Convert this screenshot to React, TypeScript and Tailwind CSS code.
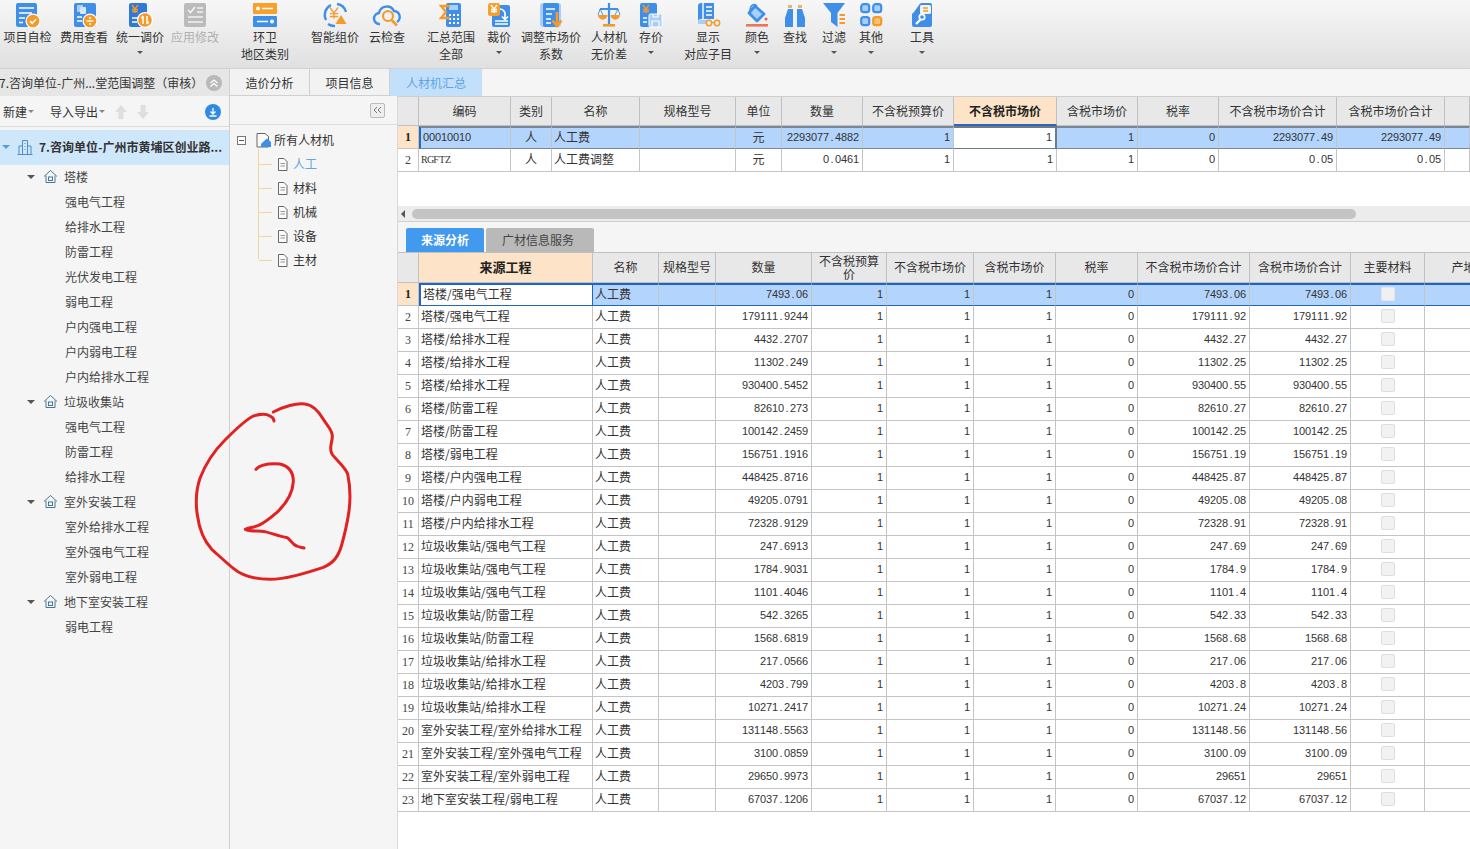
import React from "react";

const B = "#3f8fe8";
const O = "#f39a2b";

function Yen({ x, y, s = 1, c = "#fff" }: { x: number; y: number; s?: number; c?: string }) {
  return (
    <path
      d={`M${x - 3 * s} ${y - 4 * s}L${x} ${y}L${x + 3 * s} ${y - 4 * s}M${x} ${y}V${y + 4 * s}M${x - 3 * s} ${y + 0.5 * s}H${x + 3 * s}M${x - 3 * s} ${y + 2.5 * s}H${x + 3 * s}`}
      stroke={c}
      strokeWidth="1.3"
      fill="none"
    />
  );
}

const icons: Record<string, React.ReactNode> = {
  check: (
    <>
      <rect x="4" y="3" width="21" height="24" rx="2" fill={B} />
      <path d="M7 8H22M7 13H20M7 18H13M7 22.5H11" stroke="#fff" strokeWidth="1.6" />
      <circle cx="21" cy="21" r="7.5" fill="#fff" />
      <circle cx="21" cy="21" r="6.3" fill={O} />
      <path d="M18 21l2.2 2.3 3.8-4" stroke="#fff" strokeWidth="1.6" fill="none" />
    </>
  ),
  fee: (
    <>
      <rect x="6" y="3" width="22" height="24" rx="2" fill={B} />
      <rect x="9" y="5" width="6" height="7" rx="1" fill="#a9d0f8" />
      <rect x="12" y="7" width="6" height="7" rx="1" fill="#d5e8fb" />
      <path d="M9 17H14M9 21H14" stroke="#fff" strokeWidth="1.6" />
      <circle cx="22" cy="21" r="7.5" fill="#fff" />
      <circle cx="22" cy="21" r="6.3" fill={O} />
      <path d="M18.5 21H25.5" stroke="#fff" strokeWidth="1.4" />
      <circle cx="22" cy="18" r="1" fill="#fff" />
      <circle cx="22" cy="24" r="1" fill="#fff" />
    </>
  ),
  unify: (
    <>
      <rect x="5" y="3" width="18" height="24" rx="2" fill="#2f7ad6" />
      <Yen x={11} y={9} c={O} />
      <path d="M8 18H14M8 22H13" stroke="#fff" strokeWidth="1.5" />
      <circle cx="21" cy="20" r="8" fill="#fff" />
      <circle cx="21" cy="20" r="6.8" fill={O} />
      <path d="M19 16v8M19 16l-1.8 2.2M23 24v-8M23 24l1.8-2.2" stroke="#fff" strokeWidth="1.5" fill="none" />
    </>
  ),
  apply: (
    <>
      <rect x="5" y="3" width="22" height="24" rx="2" fill="#bbbbbb" />
      <path d="M9 10l2.5 2.5L16 7M18 8H24M18 12H24M9 17H24M9 22H24" stroke="#f2f2f2" strokeWidth="1.7" fill="none" />
    </>
  ),
  region: (
    <>
      <rect x="4" y="3" width="24" height="11" rx="1" fill="#f6a02d" />
      <rect x="4" y="16" width="24" height="11" rx="1" fill={B} />
      <circle cx="9" cy="8.5" r="2" fill="#fff" />
      <path d="M13 8.5H24M8 21.5H19" stroke="#fff" strokeWidth="1.6" />
      <circle cx="23" cy="21.5" r="2" fill="#fff" />
    </>
  ),
  smart: (
    <>
      <path d="M7 20A11 11 0 0 1 12 5M18 4A11 11 0 0 1 27 12M9 24A11 11 0 0 0 16 26" stroke={B} strokeWidth="2.4" fill="none" />
      <Yen x={15} y={13} s={1.4} c={O} />
      <path d="M22 15l5.500 9h-11z" fill={O} />
    </>
  ),
  cloud: (
    <>
      <path d="M9 24A5.500 5.500 0 0 1 8 13A8 8 0 0 1 23 11A6 6 0 0 1 26 22" stroke={B} strokeWidth="2.4" fill="none" />
      <circle cx="17" cy="16" r="5" stroke={O} strokeWidth="2.2" fill="#f2f2f2" />
      <path d="M20.500 20L26 25.500" stroke={O} strokeWidth="2.6" />
    </>
  ),
  sum: (
    <>
      <rect x="11" y="3" width="15" height="24" rx="2" fill={B} />
      <rect x="14" y="5" width="9" height="5" fill="#a9d0f8" />
      <path d="M14 15h2M18 15h2M22 15h2M14 19h2M18 19h2M22 19h2M14 23h2M18 23h2M22 23h2" stroke="#fff" strokeWidth="1.8" />
      <path d="M15 6H6L11 12L6 18H15" stroke={O} strokeWidth="2.3" fill="none" />
    </>
  ),
  cut: (
    <>
      <rect x="9" y="5" width="18" height="22" rx="2" fill={B} />
      <path d="M16 9A6 6 0 0 1 22 13V19M19 16.500l3 3 3-3" stroke="#fff" strokeWidth="1.7" fill="none" />
      <path d="M12 21H25M12 24H25" stroke="#fff" strokeWidth="1.4" />
      <rect x="5" y="3" width="12" height="13" rx="2.500" fill="#f6a02d" />
      <Yen x={11} y={9} />
    </>
  ),
  adjust: (
    <>
      <rect x="5" y="3" width="21" height="24" rx="3" fill="#a9cef5" />
      <rect x="8" y="3" width="16" height="24" rx="2" fill={B} />
      <path d="M11 9H20M11 14H17M11 19H16M11 23H16" stroke="#fff" strokeWidth="1.6" />
      <path d="M22 12V25M17.500 20.500L22 26L26.500 20.500" stroke={O} strokeWidth="2.6" fill="none" />
    </>
  ),
  scale: (
    <>
      <path d="M16 3V24M7 9H25" stroke={B} strokeWidth="2.2" />
      <rect x="10" y="24" width="12" height="2.600" fill={O} />
      <path d="M7 9L5 15M7 9L10 15M25 9L22 15M25 9L27 15" stroke={B} strokeWidth="0.9" />
      <path d="M5 15H14.500A4.700 4.700 0 0 1 5 15ZM17.500 15H27A4.700 4.700 0 0 1 17.500 15Z" fill={O} />
    </>
  ),
  save: (
    <>
      <rect x="5" y="3" width="17" height="24" rx="2" fill={B} />
      <Yen x={11} y={9} c={O} />
      <path d="M8 18H12M8 22H12" stroke="#fff" strokeWidth="1.500" />
      <rect x="14" y="14" width="13" height="13" rx="1.500" fill="#a9cef5" stroke="#fff" />
      <path d="M17 27V21H24V27M18 14V17H23V14" stroke="#fff" strokeWidth="1.200" fill="none" />
    </>
  ),
  book: (
    <>
      <path d="M6 6A3 3 0 0 1 9 3H22V19H9A3 3 0 0 0 6 22Z" fill={B} />
      <rect x="6" y="20" width="10" height="4" fill="#a9cef5" />
      <path d="M11 3V19" stroke="#fff" strokeWidth="1.400" />
      <path d="M14 7H20M14 11H20M14 15H20" stroke="#fff" strokeWidth="1.500" />
      <circle cx="17" cy="23" r="2.700" fill="#f3f3f3" stroke={O} strokeWidth="1.500" />
      <circle cx="25" cy="23" r="2.700" fill="#f3f3f3" stroke={O} strokeWidth="1.500" />
      <path d="M19.700 22.500H22.300" stroke={O} strokeWidth="1.300" />
    </>
  ),
  color: (
    <>
      <path d="M14 6L23 14L16 21L8 13Z" fill="#a9d0f8" stroke={B} strokeWidth="2.800" strokeLinejoin="round" />
      <path d="M9 11C9 5 13 3 16 6" stroke={B} strokeWidth="1.500" fill="none" />
      <circle cx="25" cy="19" r="1.500" fill="#e8604c" />
      <rect x="5" y="24" width="22" height="2.600" fill="#e8785a" />
    </>
  ),
  find: (
    <>
      <path d="M9 9H14V27H6V18Z" fill={B} />
      <path d="M18 9H23L26 18V27H18Z" fill={B} />
      <rect x="9" y="5" width="4" height="3" fill="#eab569" />
      <rect x="19" y="5" width="4" height="3" fill="#eab569" />
    </>
  ),
  filter: (
    <>
      <path d="M5 3H27L19.500 13V27L13 22V13Z" fill={B} />
      <path d="M21.500 15H27M21.500 19H27M21.500 23H27" stroke={O} strokeWidth="2" />
    </>
  ),
  other: (
    <>
      <rect x="6.200" y="4.200" width="8" height="8" rx="2.500" fill="#a9cef5" stroke={B} strokeWidth="2.200" />
      <rect x="18.200" y="4.200" width="8" height="8" rx="2.500" fill="#a9cef5" stroke={B} strokeWidth="2.200" />
      <rect x="6.200" y="17.200" width="8" height="8" rx="2.500" fill="#a9cef5" stroke={B} strokeWidth="2.200" />
      <rect x="18.200" y="17.200" width="8" height="8" rx="2.500" fill="#fbc36e" stroke={O} strokeWidth="2.200" />
    </>
  ),
  tool: (
    <>
      <path d="M8 12L13 5A3 3 0 0 1 16 3H24A2 2 0 0 1 26 5V25A2 2 0 0 1 24 27H8A2 2 0 0 1 6 25V14Z" fill={B} />
      <rect x="14" y="5" width="11" height="9" rx="1.500" fill="#f4f4f4" />
      <path d="M17 8H22M17 11H22" stroke={O} strokeWidth="1.500" />
      <path d="M10 24L15 19" stroke="#fff" strokeWidth="2.400" />
      <circle cx="16" cy="17" r="2.700" fill="none" stroke="#fff" strokeWidth="1.700" />
    </>
  ),
};

type Tool = { w: string; icon: string; l: string[]; caret?: boolean; off?: boolean };

const tools: Tool[] = [
  { w: "w-[55px]", icon: "check", l: ["项目自检"] },
  { w: "w-[58px]", icon: "fee", l: ["费用查看"] },
  { w: "w-[54px]", icon: "unify", l: ["统一调价"], caret: true },
  { w: "w-[56px]", icon: "apply", l: ["应用修改"], off: true },
  { w: "w-[84px]", icon: "region", l: ["环卫", "地区类别"] },
  { w: "w-[56px]", icon: "smart", l: ["智能组价"] },
  { w: "w-[48px]", icon: "cloud", l: ["云检查"] },
  { w: "w-[80px]", icon: "sum", l: ["汇总范围", "全部"] },
  { w: "w-[16px]", icon: "cut", l: ["裁价"], caret: true },
  { w: "w-[88px]", icon: "adjust", l: ["调整市场价", "系数"] },
  { w: "w-[28px]", icon: "scale", l: ["人材机", "无价差"] },
  { w: "w-[56px]", icon: "save", l: ["存价"], caret: true },
  { w: "w-[58px]", icon: "book", l: ["显示", "对应子目"] },
  { w: "w-[40px]", icon: "color", l: ["颜色"], caret: true },
  { w: "w-[36px]", icon: "find", l: ["查找"] },
  { w: "w-[42px]", icon: "filter", l: ["过滤"], caret: true },
  { w: "w-[32px]", icon: "other", l: ["其他"], caret: true },
  { w: "w-[70px]", icon: "tool", l: ["工具"], caret: true },
];

function ToolItem({ t }: { t: Tool }) {
  return (
    <div className={`${t.w} shrink-0 flex flex-col items-center`}>
      <svg width="32" height="28" viewBox="0 0 32 28" className="shrink-0 overflow-visible">
        {icons[t.icon]}
      </svg>
      {t.l.map((s) => (
        <div key={s} className={`h-[17px] leading-[17px] whitespace-nowrap ${t.off ? "text-[#b0b0b0]" : "text-[#333]"}`}>
          {s}
        </div>
      ))}
      {t.caret && <div className="mt-[6px] w-0 h-0 border-x-[3px] border-x-transparent border-t-[3px] border-t-[#555]" />}
    </div>
  );
}

// Fixed-pitch figures: each character sits in a 6px cell like the bitmap font of the original.
function Mono({ v, serif }: { v: string; serif?: boolean }) {
  return (
    <span className={serif ? "font-['Liberation_Serif',serif] text-[10px]" : "font-['Liberation_Sans',sans-serif] text-[11px]"}>
      {v.split("").map((c, i) => (
        <span key={i} className="inline-block w-[6px] text-center">
          {c}
        </span>
      ))}
    </span>
  );
}

const num = "justify-end pr-[3px]";
const txt = "pl-[2px]";
const ctr = "justify-center";
const base = "flex items-center whitespace-nowrap overflow-hidden text-[#333] border-r border-b border-[#c4c4c4] h-[23px] pb-[2px]";

function RowNo({ n, on }: { n: number; on?: boolean }) {
  return (
    <div className={`flex items-center justify-center border-r border-b border-[#c4c4c4] h-[23px] pb-[1px] font-['Liberation_Serif',serif] text-[12px] ${on ? "bg-[#fde4c8] font-bold text-[#222]" : "bg-white text-[#444]"}`}>
      {n}
    </div>
  );
}

const headCell = "flex items-center justify-center text-center whitespace-nowrap bg-[#e8e8e8] text-[#333] border-r border-b border-[#c0c0c0]";

const topHead = ["编码", "类别", "名称", "规格型号", "单位", "数量", "不含税预算价", "不含税市场价", "含税市场价", "税率", "不含税市场价合计", "含税市场价合计", ""];
const topRows = [
  ["00010010", "人", "人工费", "", "元", "2293077.4882", "1", "1", "1", "0", "2293077.49", "2293077.49", ""],
  ["RGFTZ", "人", "人工费调整", "", "元", "0.0461", "1", "1", "1", "0", "0.05", "0.05", ""],
];
const topAlign = ["pl-[2px]", ctr, txt, txt, ctr, num, num, num, num, num, num, num, txt];

const TOP_GRID = "grid grid-cols-[21px_92px_41px_88px_96px_46px_81px_91px_103px_81px_81px_118px_108px_1fr]";
const BOT_GRID = "grid grid-cols-[21px_174px_66px_57px_96px_75px_87px_82px_82px_112px_101px_74px_78px]";

const botHead = ["来源工程", "名称", "规格型号", "数量", "不含税预算价", "不含税市场价", "含税市场价", "税率", "不含税市场价合计", "含税市场价合计", "主要材料", "产地"];

const botData: [string, string, string][] = [
  ["塔楼/强电气工程", "7493.06", "7493.06"],
  ["塔楼/强电气工程", "179111.9244", "179111.92"],
  ["塔楼/给排水工程", "4432.2707", "4432.27"],
  ["塔楼/给排水工程", "11302.249", "11302.25"],
  ["塔楼/给排水工程", "930400.5452", "930400.55"],
  ["塔楼/防雷工程", "82610.273", "82610.27"],
  ["塔楼/防雷工程", "100142.2459", "100142.25"],
  ["塔楼/弱电工程", "156751.1916", "156751.19"],
  ["塔楼/户内强电工程", "448425.8716", "448425.87"],
  ["塔楼/户内弱电工程", "49205.0791", "49205.08"],
  ["塔楼/户内给排水工程", "72328.9129", "72328.91"],
  ["垃圾收集站/强电气工程", "247.6913", "247.69"],
  ["垃圾收集站/强电气工程", "1784.9031", "1784.9"],
  ["垃圾收集站/强电气工程", "1101.4046", "1101.4"],
  ["垃圾收集站/防雷工程", "542.3265", "542.33"],
  ["垃圾收集站/防雷工程", "1568.6819", "1568.68"],
  ["垃圾收集站/给排水工程", "217.0566", "217.06"],
  ["垃圾收集站/给排水工程", "4203.799", "4203.8"],
  ["垃圾收集站/给排水工程", "10271.2417", "10271.24"],
  ["室外安装工程/室外给排水工程", "131148.5563", "131148.56"],
  ["室外安装工程/室外强电气工程", "3100.0859", "3100.09"],
  ["室外安装工程/室外弱电工程", "29650.9973", "29651"],
  ["地下室安装工程/弱电工程", "67037.1206", "67037.12"],
];

const leftTree: { t: string; kids: string[] }[] = [
  { t: "塔楼", kids: ["强电气工程", "给排水工程", "防雷工程", "光伏发电工程", "弱电工程", "户内强电工程", "户内弱电工程", "户内给排水工程"] },
  { t: "垃圾收集站", kids: ["强电气工程", "防雷工程", "给排水工程"] },
  { t: "室外安装工程", kids: ["室外给排水工程", "室外强电气工程", "室外弱电工程"] },
  { t: "地下室安装工程", kids: ["弱电工程"] },
];

function House() {
  return (
    <svg width="15" height="15" viewBox="0 0 15 15" className="shrink-0" fill="none" stroke="#4a7696" strokeWidth="1">
      <path d="M1 7.500L7.500 1.500L14 7.500M3 6.500V13.500H12V6.500" />
      <rect x="5.500" y="8" width="4" height="3.500" />
    </svg>
  );
}

function Caret() {
  return <div className="w-0 h-0 border-x-[4px] border-x-transparent border-t-[4px] border-t-[#555]" />;
}

function FileIcon() {
  return (
    <svg width="11" height="13" viewBox="0 0 11 13" className="shrink-0" fill="#fafafa" stroke="#666">
      <path d="M1.500 .5H7L10 3.500V12.500H1.500Z" />
      <path d="M3.500 5.500H8M3.500 8H8" stroke="#999" />
    </svg>
  );
}

function Tree2Row({ t, active }: { t: string; active?: boolean }) {
  return (
    <div className="h-[24px] flex items-center">
      <div className="w-[13px] h-0 border-t border-[#f3d49c]" />
      <div className="ml-[5px]">
        <FileIcon />
      </div>
      <span className={`ml-[5px] ${active ? "text-[#62a6e4]" : "text-[#333]"}`}>{t}</span>
    </div>
  );
}

export default function App() {
  return (
    <div className="relative w-[1470px] h-[849px] overflow-hidden flex flex-col bg-[#f5f5f5] text-[12px] font-['Noto_Sans_CJK_SC','Noto_Sans',sans-serif]">
      {/* ribbon */}
      <div className="h-[69px] shrink-0 flex bg-gradient-to-b from-[#f7f7f7] to-[#e0e0e0] border-b border-[#d2d2d2]">
        {tools.map((t) => (
          <ToolItem key={t.icon} t={t} />
        ))}
      </div>

      {/* tab strip */}
      <div className="h-[27px] shrink-0 flex items-stretch">
        <div className="w-[230px] shrink-0 bg-[#e6e6e6] flex items-center justify-between pr-[7px] border-r border-[#d0d0d0]">
          <span className="whitespace-nowrap text-[#333] -ml-[1px]">7.咨询单位-广州...堂范围调整（审核）</span>
          <div className="w-[16px] h-[16px] rounded-full bg-[#b9b9b9] flex items-center justify-center">
            <svg width="10" height="10" viewBox="0 0 10 10" fill="none" stroke="#fff" strokeWidth="1.300">
              <path d="M1.500 5L5 2L8.500 5M1.500 8.500L5 5.500L8.500 8.500" />
            </svg>
          </div>
        </div>
        <div className="w-[80px] pt-[1px] flex items-center justify-center text-[#333] bg-[#f2f2f2] border-r border-b border-[#d0d0d0]">造价分析</div>
        <div className="w-[80px] pt-[1px] flex items-center justify-center text-[#333] bg-[#f2f2f2] border-r border-b border-[#d0d0d0]">项目信息</div>
        <div className="w-[92px] pt-[1px] flex items-center justify-center text-[#5fa5e6] bg-[#c3e0fa]">人材机汇总</div>
      </div>

      <div className="flex-1 flex min-h-0">
        {/* left */}
        <div className="w-[230px] shrink-0 border-r border-[#d0d0d0] flex flex-col">
          <div className="h-[31px] shrink-0 pt-[1px] flex items-center border-b border-[#dcdcdc] pl-[3px] pr-[8px] text-[#333]">
            <span>新建</span>
            <div className="ml-[1px] w-0 h-0 border-x-[3px] border-x-transparent border-t-[3px] border-t-[#888]" />
            <span className="ml-[16px]">导入导出</span>
            <div className="ml-[1px] w-0 h-0 border-x-[3px] border-x-transparent border-t-[3px] border-t-[#888]" />
            <svg width="14" height="16" viewBox="0 0 14 16" className="ml-[9px]" fill="#dedede">
              <path d="M7 1L13 8H9.500V15H4.500V8H1Z" />
            </svg>
            <svg width="14" height="16" viewBox="0 0 14 16" className="ml-[8px]" fill="#dedede">
              <path d="M7 15L13 8H9.500V1H4.500V8H1Z" />
            </svg>
            <div className="ml-auto w-[16px] h-[16px] rounded-full bg-[#2f8ae6] flex items-center justify-center">
              <svg width="10" height="10" viewBox="0 0 10 10" fill="none" stroke="#fff" strokeWidth="1.300">
                <path d="M5 1V7M2.500 4.500L5 7L7.500 4.500M1.500 9H8.500" />
              </svg>
            </div>
          </div>
          <div className="mt-[3px] h-[35px] shrink-0 pb-[1px] bg-[#cfe7fb] flex items-center pl-[2px]">
            <div className="w-0 h-0 border-x-[4px] border-x-transparent border-t-[4px] border-t-[#4f9fe0]" />
            <svg width="16" height="16" viewBox="0 0 16 16" className="ml-[7px]" fill="none" stroke="#4f8fc8">
              <path d="M.5 15.500H15.500M2 15.500V7H5.500M5.500 15.500V1.500H10.500V15.500M10.500 7H14V15.500M7.500 4.500H8.500M7.500 7.500H8.500M7.500 10.500H8.500" />
            </svg>
            <span className="ml-[6px] font-bold text-[#333] whitespace-nowrap">7.咨询单位-广州市黄埔区创业路...</span>
          </div>
          <div className="-mt-[1px]">
            {leftTree.map((g) => (
              <div key={g.t}>
                <div className="h-[25px] flex items-center pl-[27px] text-[#444]">
                  <Caret />
                  <div className="ml-[8px]">
                    <House />
                  </div>
                  <span className="ml-[6px]">{g.t}</span>
                </div>
                {g.kids.map((k, i) => (
                  <div key={k + i} className="h-[25px] flex items-center pl-[65px] text-[#444]">
                    {k}
                  </div>
                ))}
              </div>
            ))}
          </div>
        </div>

        {/* middle */}
        <div className="w-[168px] shrink-0 flex flex-col border-r border-[#d8d8d8]">
          <div className="h-[29px] shrink-0 border-b border-[#dcdcdc] flex items-center justify-end pr-[12px]">
            <div className="w-[15px] h-[15px] border border-[#bbb] rounded-[2px] bg-[#eee] flex items-center justify-center">
              <svg width="9" height="8" viewBox="0 0 9 8" fill="none" stroke="#777">
                <path d="M4 1L1 4L4 7M8 1L5 4L8 7" />
              </svg>
            </div>
          </div>
          <div className="pl-[7px] pt-[6px]">
            <div className="h-[18px] flex items-center">
              <div className="w-[9px] h-[9px] border border-[#777] flex items-center justify-center bg-white">
                <div className="w-[5px] h-px bg-[#555]" />
              </div>
              <svg width="15" height="15" viewBox="0 0 15 15" className="ml-[10px]" fill="none">
                <path d="M1 .5H9L12.500 3.500V14H1Z" stroke="#666" fill="#fafafa" />
                <path d="M8 8L11 5.500L15 9V14H5V11Z" fill={B} />
              </svg>
              <span className="ml-[3px] text-[#333]">所有人材机</span>
            </div>
            <div className="ml-[21px] border-l border-[#f3d49c] h-[110px] pt-[3px]">
              <Tree2Row t="人工" active />
              <Tree2Row t="材料" />
              <Tree2Row t="机械" />
              <Tree2Row t="设备" />
              <Tree2Row t="主材" />
            </div>
          </div>
        </div>

        {/* right */}
        <div className="flex-1 min-w-0 flex flex-col border-t border-[#cfcfcf]">
          {/* top table */}
          <div className="h-[109px] shrink-0 bg-white overflow-hidden">
            <div className={TOP_GRID}>
              <div className={`${headCell} h-[29px]`} />
              {topHead.map((h, i) => (
                <div key={i} className={`${headCell} h-[29px] ${i === 7 ? "!bg-[#fde4c8] font-bold !text-[#222] !border-b-2 !border-b-[#2a66c0]" : ""}`}>
                  {h}
                </div>
              ))}
            </div>
            {topRows.map((r, ri) => (
              <div key={ri} className={TOP_GRID}>
                <RowNo n={ri + 1} on={ri === 0} />
                {r.map((c, i) => {
                  const sel = ri === 0;
                  const cls = sel
                    ? i === 7
                      ? "bg-white border-y-2 !border-y-[#6e7c8a] !border-r-2 !border-r-[#6e7c8a]"
                      : `bg-[#b3d4fc] border-y-2 !border-y-[#7a8794] ${i === 0 ? "border-l-2 !border-l-[#2a66c0]" : ""}`
                    : "";
                  const isMono = i === 0 || (i >= 5 && i <= 11);
                  return (
                    <div key={i} className={`${base} ${topAlign[i]} ${cls}`}>
                      {isMono ? <Mono v={c} serif={c === "RGFTZ"} /> : c}
                    </div>
                  );
                })}
              </div>
            ))}
          </div>

          {/* scrollbar */}
          <div className="h-[16px] shrink-0 bg-[#ececec] border-b border-[#d0d0d0] flex items-center pl-[3px]">
            <div className="w-0 h-0 border-y-[4px] border-y-transparent border-r-[4px] border-r-[#555]" />
            <div className="ml-[7px] w-[944px] h-[10px] rounded-full bg-[#c4c4c4]" />
          </div>

          {/* tabs */}
          <div className="h-[30px] shrink-0 flex items-end pl-[8px] gap-[2px]">
            <div className="w-[78px] h-[24px] rounded-t-[2px] bg-[#429aee] text-white font-bold flex items-center justify-center">来源分析</div>
            <div className="w-[108px] h-[24px] pr-[4px] rounded-t-[2px] bg-[#b9b9b9] text-[#444] flex items-center justify-center">广材信息服务</div>
          </div>

          {/* bottom table */}
          <div className="flex-1 bg-white border-t border-[#c0c0c0] overflow-hidden">
            <div className={BOT_GRID}>
              <div className={`${headCell} h-[30px]`} />
              {botHead.map((h, i) => (
                <div
                  key={h}
                  className={`${headCell} h-[30px] pb-[2px] ${i === 0 ? "!bg-[#fde4c8] font-bold !text-[#222] text-[13px]" : ""} ${i === 4 ? "!whitespace-normal leading-[13px] px-[3px]" : ""}`}
                >
                  {h}
                </div>
              ))}
            </div>
            {botData.map(([name, qty, total], ri) => {
              const sel = ri === 0;
              const selC = sel ? "bg-[#b3d4fc] border-y-2 !border-y-[#1f66c4]" : "";
              return (
                <div key={ri} className={BOT_GRID}>
                  <RowNo n={ri + 1} on={sel} />
                  <div className={`${base} ${txt} ${sel ? "border-2 !border-[#1f66c4] bg-white" : ""}`}>{name}</div>
                  <div className={`${base} ${txt} ${selC}`}>人工费</div>
                  <div className={`${base} ${selC}`} />
                  <div className={`${base} ${num} ${selC}`}><Mono v={qty} /></div>
                  <div className={`${base} ${num} ${selC}`}><Mono v="1" /></div>
                  <div className={`${base} ${num} ${selC}`}><Mono v="1" /></div>
                  <div className={`${base} ${num} ${selC}`}><Mono v="1" /></div>
                  <div className={`${base} ${num} ${selC}`}><Mono v="0" /></div>
                  <div className={`${base} ${num} ${selC}`}><Mono v={total} /></div>
                  <div className={`${base} ${num} ${selC}`}><Mono v={total} /></div>
                  <div className={`${base} justify-center ${selC}`}>
                    <div className={`w-[14px] h-[14px] rounded-[2px] border ${sel ? "bg-[#f0f0f0] border-[#e6e6e6]" : "bg-[#f2f2f2] border-[#dedede]"}`} />
                  </div>
                  <div className={`${base} ${selC}`} />
                </div>
              );
            })}
          </div>
        </div>
      </div>

      {/* hand-drawn annotation */}
      <svg width="200" height="200" viewBox="0 0 600 600" className="absolute left-[170px] top-[390px] pointer-events-none" fill="none" stroke="#e02222" strokeWidth="9" strokeLinecap="round" strokeLinejoin="round">
        <path d="M310 66C340 50 380 38 405 42C430 45 445 62 460 88C472 108 488 120 487 140C486 160 476 175 486 192C500 212 525 230 533 252C540 285 542 330 536 370C530 410 522 440 515 465C505 500 490 520 460 532C410 548 350 568 300 568C260 568 220 560 190 535C165 515 145 495 125 478C100 450 88 420 82 375C76 335 78 300 90 265C105 225 130 185 165 150C190 125 225 90 250 78C270 72 290 72 300 78C308 82 312 88 312 93" />
        <path d="M258 238C270 225 300 220 330 222C355 228 370 245 370 275C368 310 350 340 320 368C300 385 285 398 268 405C255 412 235 413 226 418C240 425 262 422 285 425C305 430 330 440 352 443C365 452 365 462 380 468C388 472 396 472 402 474" />
      </svg>
    </div>
  );
}
